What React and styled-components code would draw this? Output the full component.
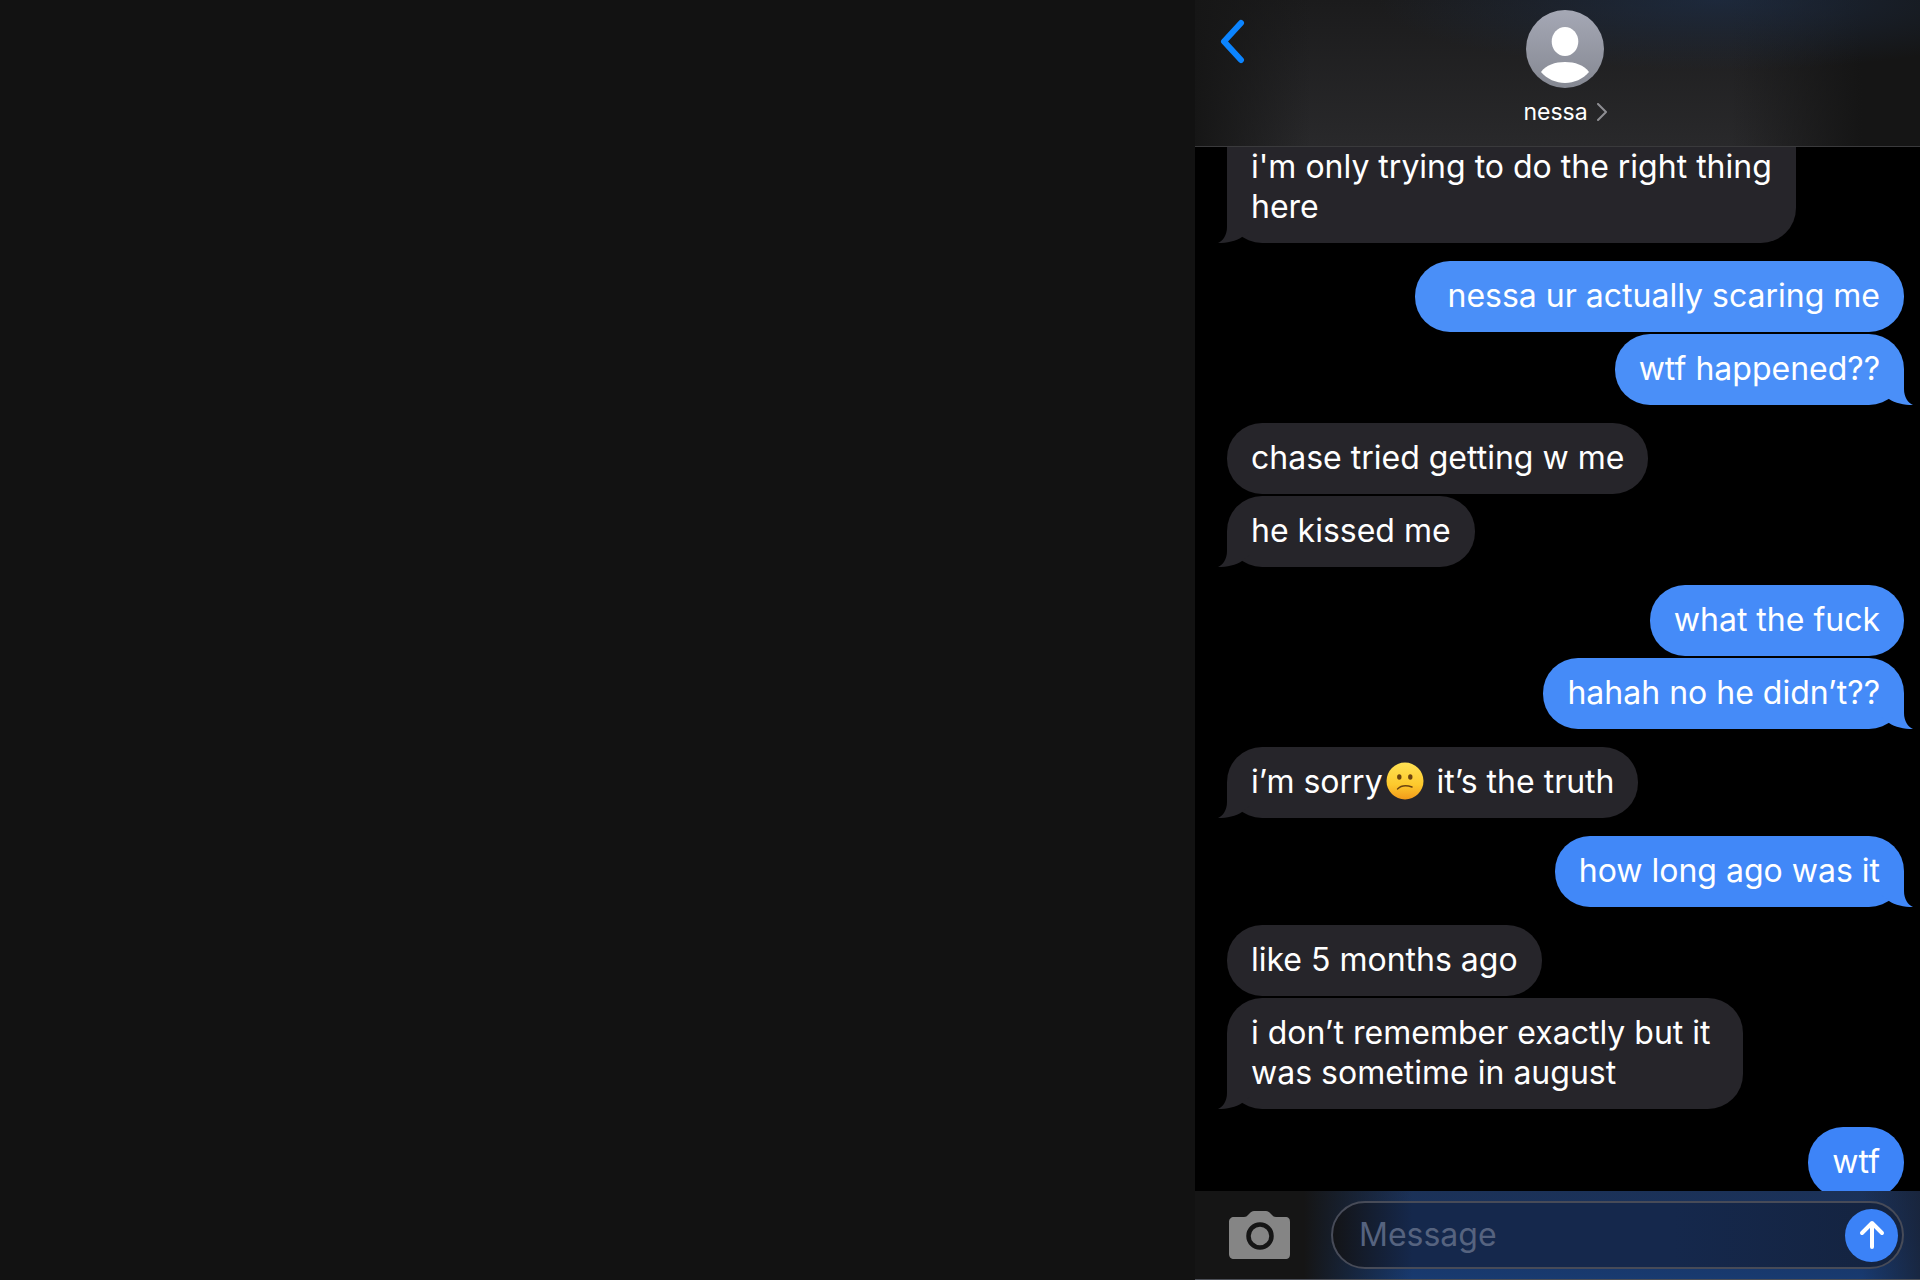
import React from "react";
import styled, { createGlobalStyle, css } from "styled-components";

const GlobalStyle = createGlobalStyle`
  *, *::before, *::after { box-sizing: border-box; }
  body {
    margin: 0;
    background: #121212;
    color: #fff;
    font-family: Inter, "Liberation Sans", sans-serif;
  }
  button, input { font: inherit; color: inherit; }
`;

const Screen = styled.div`
  display: flex;
  justify-content: flex-end;
  height: 100vh;
  overflow: hidden;
`;

const Chat = styled.main`
  display: flex;
  flex-direction: column;
  flex: 0 1 725px;
  min-width: 0;
  background: #000;
`;

const Header = styled.header`
  display: grid;
  grid-template-columns: 1fr auto 1fr;
  align-items: start;
  padding: 10px 8px 20px 24px;
  border-bottom: 1px solid #3a3a3c;
  background:
    radial-gradient(ellipse 340px 70px at 72% 0, rgba(30, 48, 76, 0.65), transparent),
    linear-gradient(90deg, #161616 0%, transparent 16%, transparent 74%, #151515 92%),
    linear-gradient(180deg, #1b1b1c, #29292b);
`;

const IconButton = styled.button`
  display: flex;
  padding: 0;
  border: 0;
  background: none;
  cursor: pointer;
`;

const BackButton = styled(IconButton)`
  justify-self: start;
  padding-top: 8px;
`;

const Contact = styled.button`
  display: flex;
  flex-direction: column;
  align-items: center;
  gap: 10px;
  padding: 0;
  border: 0;
  background: none;
  cursor: pointer;
`;

const ContactName = styled.span`
  display: flex;
  align-items: center;
  gap: 8px;
  font-size: 23px;
  line-height: 28px;
`;

const Viewport = styled.section`
  flex: 1;
  min-height: 0;
  overflow: hidden;
`;

const Thread = styled.ol`
  display: flex;
  flex-direction: column;
  gap: 18px;
  margin: -15px 0 0;
  padding: 0 16px 0 32px;
  list-style: none;
`;

const Group = styled.li`
  display: flex;
  flex-direction: column;
  align-items: ${(p) => (p.$mine ? "flex-end" : "flex-start")};
  gap: 2px;
`;

const Bubble = styled.p`
  position: relative;
  isolation: isolate;
  margin: 0;
  padding: 15px 24px 16px;
  border-radius: ${(p) => (p.$continued ? "0 0 35px 35px" : "35px")};
  background: ${(p) => p.$color};
  font-size: 32px;
  line-height: 40px;
  white-space: pre;
`;

const TailShape = styled.svg`
  position: absolute;
  z-index: -1;
  bottom: 0;
  ${(p) =>
    p.$mine
      ? css`
          right: -9px;
          transform: scaleX(-1);
        `
      : css`
          left: -9px;
        `}
`;

const Emoji = styled.svg`
  margin: 0 4px 0 3px;
  vertical-align: -7px;
`;

const Composer = styled.form`
  display: flex;
  align-items: center;
  gap: 40px;
  padding: 10px 16px 10px 34px;
  border-bottom: 1px solid #4c4f57;
  background:
    linear-gradient(90deg, #151515 15%, rgba(21, 21, 21, 0) 30%, transparent 92%, rgba(24, 34, 54, 0.8)),
    linear-gradient(180deg, #1b3157, #193462 50%, #183a70);
`;

const Field = styled.div`
  display: flex;
  flex: 1;
  min-width: 0;
  align-items: center;
  height: 68px;
  padding: 0 4px 0 26px;
  border: 2px solid #474b58;
  border-radius: 34px;
  background: linear-gradient(90deg, #131417, #15284c 14%, #15284c 60%, #14233f);
`;

const MessageInput = styled.input`
  flex: 1;
  min-width: 0;
  padding: 0;
  border: 0;
  outline: 0;
  background: none;
  font-size: 32px;
  line-height: 40px;
  &::placeholder {
    color: #56637f;
    opacity: 1;
  }
`;

const SendButton = styled(IconButton)`
  align-items: center;
  justify-content: center;
  width: 53px;
  height: 53px;
  border-radius: 50%;
  background: #3b82f7;
`;

function Tail({ mine, color }) {
  return (
    <TailShape $mine={mine} width="36" height="35" viewBox="0 0 36 35" aria-hidden="true">
      <path d="M9 0V19C9 27 5 33 0 35C9 35 18 33 24 29L36 20V0Z" fill={color} />
    </TailShape>
  );
}

function ConfusedFace() {
  return (
    <Emoji width="38" height="38" viewBox="0 0 38 38" role="img" aria-label="confused face">
      <defs>
        <linearGradient id="face" x1="0" y1="0" x2="0" y2="1">
          <stop offset="0" stopColor="#ffe254" />
          <stop offset="0.6" stopColor="#fdc92d" />
          <stop offset="1" stopColor="#f29a1a" />
        </linearGradient>
      </defs>
      <circle cx="19" cy="19" r="18.5" fill="url(#face)" />
      <ellipse cx="13.3" cy="15" rx="2.2" ry="2.8" fill="#6b4310" />
      <ellipse cx="24.3" cy="15" rx="2.2" ry="2.8" fill="#6b4310" />
      <path d="M11.5 27C15 23.5 20 23 26 25" fill="none" stroke="#6b4310" strokeWidth="1.4" strokeLinecap="round" />
    </Emoji>
  );
}

const groups = [
  { continued: true, messages: ["i'm only trying to do the right thing\nhere"] },
  { mine: true, color: "#4a8ff8", messages: [" nessa ur actually scaring me", "wtf happened??"] },
  { messages: ["chase tried getting w me", "he kissed me"] },
  { mine: true, color: "#458bf8", messages: ["what the fuck", "hahah no he didn’t??"] },
  { messages: [<>i’m sorry<ConfusedFace /> it’s the truth</>] },
  { mine: true, color: "#4188f8", messages: ["how long ago was it"] },
  { messages: ["like 5 months ago", "i don’t remember exactly but it \nwas sometime in august"] },
  { mine: true, open: true, color: "#3d84f8", messages: ["wtf"] },
];

export default function App() {
  return (
    <>
      <GlobalStyle />
      <Screen>
        <Chat>
          <Header>
            <BackButton type="button" aria-label="Back">
              <svg width="26" height="46" viewBox="0 0 26 46" fill="none">
                <path d="M22 5L5 23.5L22 42" stroke="#0b84ff" strokeWidth="6" strokeLinecap="round" strokeLinejoin="round" />
              </svg>
            </BackButton>
            <Contact type="button">
              <svg width="78" height="78" viewBox="0 0 78 78" aria-hidden="true">
                <defs>
                  <linearGradient id="avatar" x1="0" y1="0" x2="0" y2="1">
                    <stop offset="0" stopColor="#a5a8b5" />
                    <stop offset="1" stopColor="#858892" />
                  </linearGradient>
                </defs>
                <circle cx="39" cy="39" r="39" fill="url(#avatar)" />
                <ellipse cx="39" cy="31.5" rx="13.3" ry="14.5" fill="#fff" />
                <path d="M15 62C20 55 29 52 39 52C49 52 58 55 63 62C57 69 48 73 39 73C30 73 21 69 15 62Z" fill="#fff" />
              </svg>
              <ContactName>
                nessa
                <svg width="12" height="18" viewBox="0 0 12 18" fill="none" aria-hidden="true">
                  <path d="M2 1L10 9L2 17" stroke="#8e8e93" strokeWidth="2" strokeLinecap="round" strokeLinejoin="round" />
                </svg>
              </ContactName>
            </Contact>
          </Header>
          <Viewport aria-label="Conversation">
            <Thread>
              {groups.map(({ mine = false, open = false, continued = false, color = "#26252a", messages }, g) => (
                <Group key={g} $mine={mine}>
                  {messages.map((text, i) => (
                    <Bubble key={i} $color={color} $continued={continued}>
                      {!open && i === messages.length - 1 && <Tail mine={mine} color={color} />}
                      {text}
                    </Bubble>
                  ))}
                </Group>
              ))}
            </Thread>
          </Viewport>
          <Composer onSubmit={(e) => e.preventDefault()}>
            <IconButton type="button" aria-label="Camera">
              <svg width="62" height="48" viewBox="0 0 62 48">
                <path d="M5 6H15C17 6 18 5 19 4L21 2C22 1 23 0 25 0H37C39 0 40 1 41 2L43 4C44 5 45 6 47 6H56C60 6 61 8 61 11V43C61 46 60 48 56 48H5C2 48 0 46 0 43V11C0 8 2 6 5 6Z" fill="#858585" />
                <circle cx="31" cy="25" r="11.5" fill="#858585" stroke="#151515" strokeWidth="4.5" />
              </svg>
            </IconButton>
            <Field>
              <MessageInput type="text" placeholder="Message" aria-label="Message" />
              <SendButton type="submit" aria-label="Send">
                <svg width="28" height="32" viewBox="0 0 28 32" fill="none">
                  <path d="M14 28V4M4 14L14 4L24 14" stroke="#fff" strokeWidth="4" strokeLinecap="round" strokeLinejoin="round" />
                </svg>
              </SendButton>
            </Field>
          </Composer>
        </Chat>
      </Screen>
    </>
  );
}
